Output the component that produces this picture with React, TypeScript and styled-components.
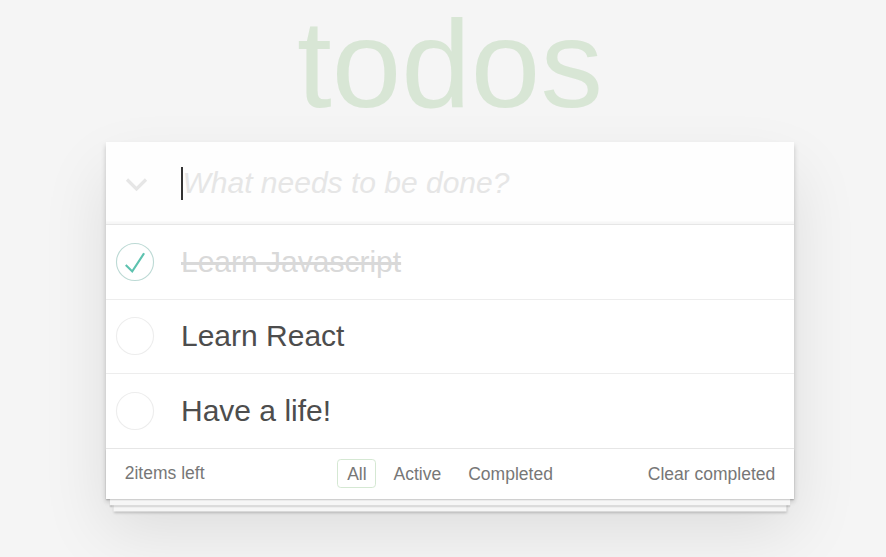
import React from 'react';
import styled, { createGlobalStyle } from 'styled-components';

const GlobalStyle = createGlobalStyle`
  html, body { margin: 0; padding: 0; background: #f5f5f5; }
  body {
    font-family: "Liberation Sans", Arial, sans-serif;
    color: #4d4d4d;
    font-size: 17.5px;
    line-height: 1.4em;
    min-height: 557px;
  }
  * { box-sizing: border-box; }
`;

const Page = styled.div`
  padding-left: 14px;
  display: flex;
  flex-direction: column;
  align-items: center;
`;

const Title = styled.h1`
  margin: -6px 0 8px;
  width: 688px;
  font-size: 125px;
  line-height: 140px;
  font-weight: 100;
  text-align: center;
  color: rgb(216, 230, 213);
`;

const Panel = styled.section`
  position: relative;
  width: 688px;
  background: #fff;
  box-shadow: 0 2.5px 5px 0 rgba(0, 0, 0, 0.2), 0 31px 62px 0 rgba(0, 0, 0, 0.1);
`;

const Header = styled.header`
  display: flex;
  align-items: center;
  height: 82px;
  background: rgba(0, 0, 0, 0.003);
  box-shadow: inset 0 -2.5px 1px rgba(0, 0, 0, 0.03);
`;

const ToggleAll = styled.div`
  width: 75px;
  flex: none;
  display: flex;
  justify-content: center;
  padding-right: 15px;
  padding-top: 2px;
`;

const Caret = styled.span`
  flex: none;
  width: 1.5px;
  height: 33px;
  background: #333;
`;

const NewTodo = styled.input`
  flex: 1;
  border: none;
  outline: none;
  background: transparent;
  padding: 0;
  font-family: inherit;
  font-size: 30px;
  line-height: 42px;
  color: inherit;
  &::placeholder {
    font-style: italic;
    color: #e6e6e6;
  }
`;

const List = styled.ul`
  margin: 0;
  padding: 0;
  list-style: none;
  border-top: 1px solid #e6e6e6;
`;

const Item = styled.li`
  display: flex;
  align-items: center;
  border-bottom: 1px solid #ededed;
  &:last-child { border-bottom: none; }
`;

const CheckBox = styled.div`
  width: 75px;
  flex: none;
  display: flex;
  padding-left: 9px;
`;

const Label = styled.label<{ $done?: boolean }>`
  display: block;
  padding: 18.75px 18.75px 18.75px 0;
  font-size: 30px;
  line-height: 1.2;
  color: ${(p) => (p.$done ? '#d9d9d9' : '#4d4d4d')};
  text-decoration: ${(p) => (p.$done ? 'line-through' : 'none')};
`;

const Footer = styled.footer`
  position: relative;
  display: grid;
  grid-template-columns: 1fr auto 1fr;
  align-items: center;
  height: 51px;
  padding: 0 18.75px;
  color: #777;
  border-top: 1px solid #e6e6e6;
  &::before {
    content: '';
    position: absolute;
    right: 0;
    bottom: 0;
    left: 0;
    height: 50px;
    overflow: hidden;
    pointer-events: none;
    box-shadow: 0 1.25px 1.25px rgba(0, 0, 0, 0.2),
      0 10px 0 -3.75px #f6f6f6,
      0 11.25px 1.25px -3.75px rgba(0, 0, 0, 0.2),
      0 20px 0 -7.5px #f6f6f6,
      0 21.25px 2.5px -7.5px rgba(0, 0, 0, 0.2);
  }
`;

const Count = styled.span`
  justify-self: start;
`;

const Filters = styled.ul`
  display: flex;
  margin: 0;
  padding: 0;
  list-style: none;
`;

const FilterLink = styled.a<{ $selected?: boolean }>`
  display: block;
  margin: 3.75px;
  padding: 3.75px 8.75px;
  line-height: 20px;
  color: inherit;
  text-decoration: none;
  border: 1.25px solid ${(p) => (p.$selected ? 'rgb(213, 232, 211)' : 'transparent')};
  border-radius: 3.75px;
`;

const ClearButton = styled.button`
  justify-self: end;
  border: none;
  background: none;
  padding: 0;
  font: inherit;
  color: inherit;
  line-height: 20px;
  cursor: pointer;
`;

const Chevron = () => (
  <svg width="23" height="15" viewBox="0 0 23 15">
    <polyline points="2,2.5 11.5,12 21,2.5" fill="none" stroke="#e6e6e6" strokeWidth="3.2" />
  </svg>
);

const Circle = ({ done }: { done?: boolean }) => (
  <svg width="40" height="40" viewBox="-4 -4 108 108">
    <circle cx="50" cy="50" r="50" fill="none" stroke={done ? '#bddad5' : '#ededed'} strokeWidth="3" />
    {done && <path fill="#5dc2af" d="M72 25L42 71 27 56l-4 4 20 20 34-52z" />}
  </svg>
);

const todos = [
  { text: 'Learn Javascript', done: true },
  { text: 'Learn React', done: false },
  { text: 'Have a life!', done: false },
];

export default function App() {
  return (
    <>
      <GlobalStyle />
      <Page>
        <Title>todos</Title>
        <Panel>
          <Header>
            <ToggleAll>
              <Chevron />
            </ToggleAll>
            <Caret />
            <NewTodo placeholder="What needs to be done?" />
          </Header>
          <List>
            {todos.map((t) => (
              <Item key={t.text}>
                <CheckBox>
                  <Circle done={t.done} />
                </CheckBox>
                <Label $done={t.done}>{t.text}</Label>
              </Item>
            ))}
          </List>
          <Footer>
            <Count>2items left</Count>
            <Filters>
              <li><FilterLink href="#/" $selected>All</FilterLink></li>
              <li><FilterLink href="#/active">Active</FilterLink></li>
              <li><FilterLink href="#/completed">Completed</FilterLink></li>
            </Filters>
            <ClearButton>Clear completed</ClearButton>
          </Footer>
        </Panel>
      </Page>
    </>
  );
}
